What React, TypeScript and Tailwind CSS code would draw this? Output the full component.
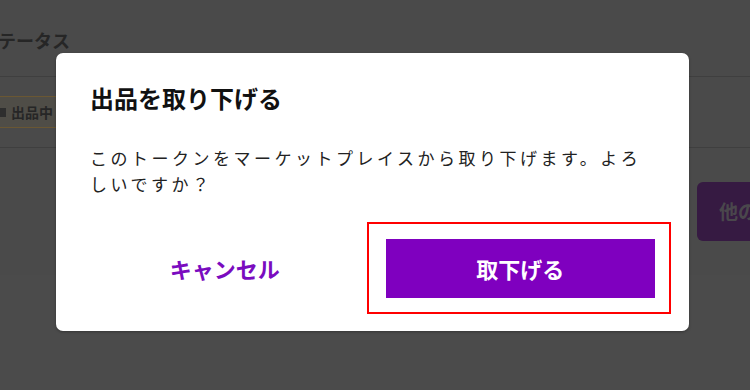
import React from "react";

function BackgroundPage() {
  return (
    <div className="h-[390px] w-[750px] overflow-hidden bg-[#4a4a4a]">
      <div className="ml-[-20px] pt-[26px]">
        <h2 className="text-[18px] font-bold leading-[28px] text-[#262626]">ステータス</h2>
      </div>
      <div className="mt-[22px] border-t border-[#3f3f3f]">
        <div className="flex h-[70px] items-center">
          <span className="ml-[-10px] flex items-center gap-[5px] rounded-[4px] border border-[#6a5733] bg-[#4f4d47] pl-[6px] pr-[7px] py-[5px] text-[14px] font-bold leading-[20px] text-[#262626]">
            <span className="h-[9px] w-[9px] bg-[#2e2e2e]" />
            出品中
          </span>
        </div>
      </div>
      <div className="border-t border-[#3f3f3f]">
        <div className="flex h-[127px] items-center justify-end">
          <div className="mr-[-60px] flex h-[59px] w-[113px] items-center rounded-[6px] bg-[#361a42] pl-[22px] text-[19px] font-bold text-[#4a474c]">
            他の出品
          </div>
        </div>
      </div>
      <div className="h-full bg-[#4b4b4b]" />
    </div>
  );
}

export default function App() {
  return (
    <div
      className="relative h-[390px] w-[750px] overflow-hidden"
      style={{ fontFamily: '"Noto Sans CJK JP", "Noto Sans", sans-serif' }}
    >
      <BackgroundPage />
      <div className="absolute inset-0 pl-[56px] pt-[53px]">
        <div className="h-[278px] w-[633px] rounded-[7px] bg-white px-[34px] pt-[28px] pb-[33px] shadow-[0_1px_3px_rgba(0,0,0,0.3)]">
          <h1 className="text-[24px] font-bold leading-[34px] text-[#111]">出品を取り下げる</h1>
          <p className="mt-[30px] text-[17px] leading-[26px] tracking-[3.5px] text-[#222]">
            このトークンをマーケットプレイスから取り下げます。よろしいですか？
          </p>
          <div className="mt-[42px] grid grid-cols-2 gap-[26px]">
            <button className="flex h-[59px] items-center justify-center text-[22px] font-bold text-[#7a0bbf]">
              キャンセル
            </button>
            <div className="relative">
              <div className="pointer-events-none absolute left-[-19px] right-[-16px] top-[-17px] bottom-[-16px] border-2 border-[#ff0000]" />
              <button className="flex h-[59px] w-full items-center justify-center bg-[#7f00bf] text-[22px] font-bold text-white">
                取下げる
              </button>
            </div>
          </div>
        </div>
      </div>
    </div>
  );
}
